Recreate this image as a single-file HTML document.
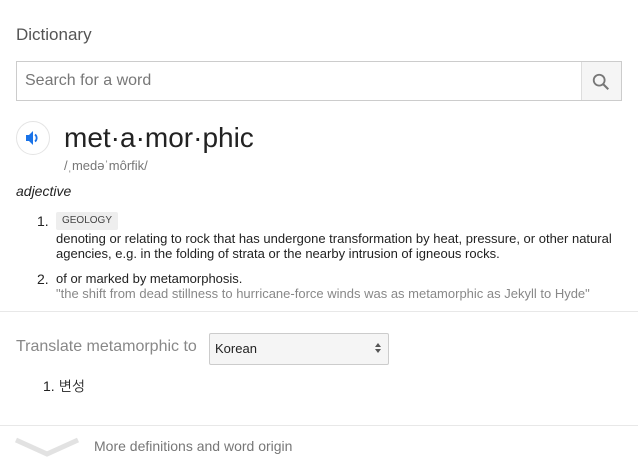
<!DOCTYPE html>
<html><head><meta charset="utf-8"><style>
body{margin:0;width:638px;height:466px;background:#fff;font-family:"Liberation Sans","NanumGothic",sans-serif;position:relative;overflow:hidden;color:#222}
.a{position:absolute;white-space:nowrap}
</style></head><body>
<div class="a" style="left:16px;top:25px;font-size:17px;color:#555">Dictionary</div>
<div class="a" style="left:16px;top:61px;width:604px;height:38px;border:1px solid #ccc;"></div>
<div class="a" style="left:25px;top:72px;font-size:16px;color:#777">Search for a word</div>
<div class="a" style="left:581px;top:62px;width:39px;height:38px;background:#f5f5f5;border-left:1px solid #ddd"></div>
<svg class="a" style="left:591px;top:72px" width="20" height="20" viewBox="0 0 22 22"><circle cx="9" cy="9" r="6" fill="none" stroke="#777" stroke-width="2"/><path d="M13.5 13.5L19 19" stroke="#777" stroke-width="2.3"/></svg>
<div class="a" style="left:16px;top:121px;width:34px;height:34px;border-radius:50%;border:1px solid #e4e4e4;box-sizing:border-box"></div>
<svg class="a" style="left:24px;top:129px" width="18" height="18" viewBox="0 0 18 18"><path d="M2 6h3l4-4v14l-4-4H2z" fill="#1a73e8"/><path d="M11 5.5a4.5 4.5 0 0 1 0 7" stroke="#1a73e8" stroke-width="1.8" fill="none"/></svg>
<div class="a" style="left:64px;top:122px;font-size:28px;color:#222">met·a·mor·phic</div>
<div class="a" style="left:64px;top:158px;font-size:13px;color:#777">/ˌmedəˈmôrfik/</div>
<div class="a" style="left:16px;top:183px;font-size:14px;font-style:italic">adjective</div>
<div class="a" style="left:37px;top:213px;font-size:14px">1.</div>
<div class="a" style="left:56px;top:212px;width:62px;height:18px;background:#eee;border-radius:2px;font-size:10px;color:#444;line-height:18px;text-align:center">GEOLOGY</div>
<div class="a" style="left:56px;top:231px;font-size:13px;line-height:15px">denoting or relating to rock that has undergone transformation by heat, pressure, or other natural<br>agencies, e.g. in the folding of strata or the nearby intrusion of igneous rocks.</div>
<div class="a" style="left:37px;top:271px;font-size:14px">2.</div>
<div class="a" style="left:56px;top:271px;font-size:13px;line-height:15px">of or marked by metamorphosis.<br><span style="color:#888">"the shift from dead stillness to hurricane-force winds was as metamorphic as Jekyll to Hyde"</span></div>
<div class="a" style="left:0;top:311px;width:638px;height:1px;background:#e8e8e8"></div>
<div class="a" style="left:16px;top:338px;font-size:16px;color:#888">Translate metamorphic to</div>
<div class="a" style="left:209px;top:333px;width:178px;height:30px;border:1px solid #ccc;background:#f5f5f5;border-radius:2px"></div>
<div class="a" style="left:215px;top:341px;font-size:13px;color:#222">Korean</div>
<svg class="a" style="left:373px;top:342px" width="10" height="12" viewBox="0 0 10 12"><path d="M2 5l3-4 3 4zM2 7l3 4 3-4z" fill="#555"/></svg>
<div class="a" style="left:43px;top:378px;font-size:14px">1. 변성</div>
<div class="a" style="left:0;top:425px;width:638px;height:1px;background:#e8e8e8"></div>
<svg class="a" style="left:14px;top:434px" width="66" height="24" viewBox="0 0 66 24"><path d="M2 6L33 20L64 6" stroke="#e2e2e2" stroke-width="5" fill="none"/></svg>
<div class="a" style="left:94px;top:438px;font-size:14px;color:#777">More definitions and word origin</div>
</body></html>
